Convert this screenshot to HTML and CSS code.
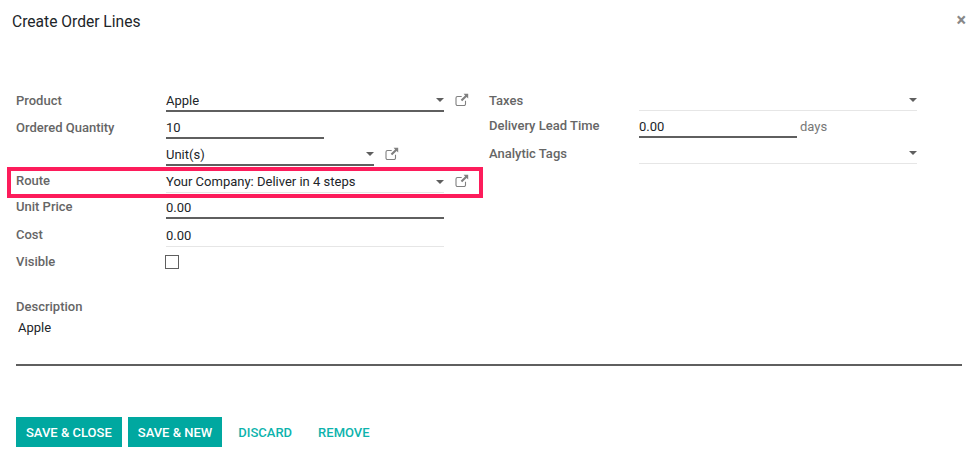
FILE: index.html
```html
<!DOCTYPE html>
<html lang="en">
<head>
<meta charset="utf-8">
<title>Create Order Lines</title>
<link rel="stylesheet" href="styles.css">
</head>
<body>
<div class="dialog">
  <header class="head"><h1 class="title">Create Order Lines</h1><span class="close">×</span></header>
  <div class="cols">
    <div class="col col-left">
      <div class="row r1"><label class="lab">Product</label><div class="field w278 strong"><span>Apple</span><i class="caret"></i></div><svg class="ext" viewBox="0 0 14 14"><use href="#ext"/></svg></div>
      <div class="row r2"><label class="lab">Ordered Quantity</label><div class="field w158 strong"><span>10</span></div></div>
      <div class="row r3"><label class="lab"></label><div class="field w208 strong"><span>Unit(s)</span><i class="caret"></i></div><svg class="ext" viewBox="0 0 14 14"><use href="#ext"/></svg></div>
      <div class="row r4"><label class="lab">Route</label><div class="field w278"><span>Your Company: Deliver in 4 steps</span><i class="caret"></i></div><svg class="ext" viewBox="0 0 14 14"><use href="#ext"/></svg></div>
      <div class="row r5"><label class="lab">Unit Price</label><div class="field w278 strong"><span>0.00</span></div></div>
      <div class="row r6"><label class="lab">Cost</label><div class="field w278"><span>0.00</span></div></div>
      <div class="row r7"><label class="lab">Visible</label><span class="check"></span></div>
    </div>
    <div class="col col-right">
      <div class="row rr1"><label class="lab lab-r">Taxes</label><div class="field w278"><span></span><i class="caret"></i></div></div>
      <div class="row rr2"><label class="lab lab-r">Delivery Lead Time</label><div class="field w158 strong"><span>0.00</span></div><span class="unit">days</span></div>
      <div class="row rr3"><label class="lab lab-r">Analytic Tags</label><div class="field w278"><span></span><i class="caret"></i></div></div>
    </div>
  </div>
  <section class="desc">
    <div class="lab">Description</div>
    <div class="desc-box">Apple</div>
  </section>
  <footer class="foot">
    <button class="btn primary">SAVE &amp; CLOSE</button>
    <button class="btn primary">SAVE &amp; NEW</button>
    <button class="btn link">DISCARD</button>
    <button class="btn link">REMOVE</button>
  </footer>
  <div class="highlight"></div>
</div>
<svg class="defs" width="0" height="0"><defs><symbol id="ext" viewBox="0 0 14 14"><path d="M10.5 7.8v3.2a1.5 1.5 0 0 1-1.5 1.5H2.5A1.5 1.5 0 0 1 1 11V5a1.5 1.5 0 0 1 1.5-1.5h4.2" fill="none" stroke="#808080" stroke-width="1.1"/><path d="M8.6 .8H13.2V5.4L11.6 3.9 7.2 8.3 5.7 6.8 10.1 2.4Z" fill="#808080"/></symbol></defs></svg>
</body>
</html>
```
FILE: styles.css
```css
* { box-sizing: border-box; }
html, body { margin: 0; padding: 0; background: #fff; }
body { width: 978px; height: 468px; overflow: hidden; font-family: Roboto, "Noto Sans", sans-serif; font-size: 13px; color: #212529; }
.dialog { position: relative; width: 978px; height: 468px; }
.head { display: flex; justify-content: space-between; padding: 13px 12px 0 12px; height: 86px; }
.title { margin: 0; font-size: 15.6px; font-weight: 400; line-height: 18px; color: #212529; }
.close { font-size: 18px; font-weight: 700; line-height: 14px; color: #888; }
.cols { display: flex; height: 213px; }
.col-left { width: 473px; padding-left: 16px; }
.col-right { padding-left: 16px; }
.row { display: flex; align-items: flex-end; }
.lab { font-weight: 500; font-size: 13px; line-height: 16px; color: #666; }
.row > .lab { width: 150px; align-self: flex-start; padding-top: 7px; height: 24px; }
.field { display: flex; justify-content: space-between; align-items: center; height: 26px; padding-top: 4px; border-bottom: 1px solid #e6e6e6; }
.field.strong { border-bottom: 2px solid #5f5f5f; }
.w278 { width: 278px; }
.w158 { width: 158px; }
.w208 { width: 208px; }
.caret { width: 0; height: 0; border-left: 4px solid transparent; border-right: 4px solid transparent; border-top: 4px solid #5f5f5f; }
.ext { width: 14px; height: 14px; margin: 0 0 5px 11px; }
.unit { color: #777; margin: 0 0 4px 3px; }
.r1 { height: 26px; }
.r2 { height: 27px; }
.r3 { height: 27px; }
.r4 { height: 27px; }
.r5 { height: 26px; }
.r6 { height: 28px; }
.r7 { height: 27px; }
.r2 > .lab { padding-top: 8px; }
.r5 > .lab { padding-top: 6px; }
.r6 > .lab { padding-top: 8px; }
.r7 .check { width: 14px; height: 14px; border: 1px solid #5f5f5f; margin: 0 0 5px -1px; }
.rr1 { height: 25px; }
.rr2 { height: 27px; }
.rr3 { height: 26px; }
.rr2 > .lab { padding-top: 7px; }
.rr3 > .lab { padding-top: 8px; }
.desc { padding: 0 16px; }
.desc .lab { line-height: 16px; }
.desc-box { height: 51px; padding: 5px 2px; border-bottom: 2px solid #5f5f5f; color: #212529; }
.foot { display: flex; gap: 6px; padding: 51px 0 0 16px; }
.btn { height: 30px; font: 500 13px Roboto, sans-serif; border: 0; border-radius: 0; padding: 0 10px; background: none; }
.primary { background: #00a8a0; color: #fff; }
.link { color: #0db3ad; }
.highlight { position: absolute; left: 7px; top: 167px; width: 476px; height: 31px; border: 4px solid #fd1c5b; }
.defs { position: absolute; }
```
